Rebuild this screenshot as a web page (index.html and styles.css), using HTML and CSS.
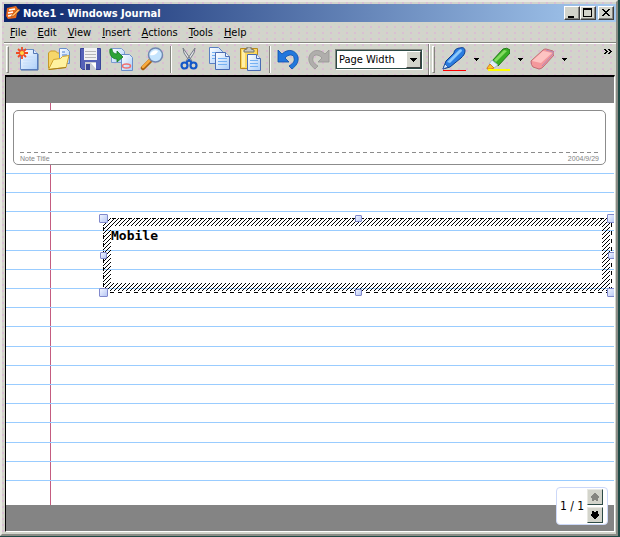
FILE: index.html
```html
<!DOCTYPE html>
<html lang="en">

<head>
    <meta charset="UTF-8" />
    <title>Note1 - Windows Journal</title>
    <link rel="stylesheet" href="styles.css">
</head>

<body>
    <div class="window">
        <!-- title bar -->
        <header class="titlebar">
            <svg class="app-icon" viewBox="0 0 16 16">
                <path d="M2 3l9-2 2 3-2 9-8 1-2-3z" fill="#e8681c" />
                <path d="M4 5l6-1M3 8l5-1M3 11l5-1" stroke="#fff" stroke-width="1.5" />
                <path d="M7 10l6-6 2 1-6 6-3 1z" fill="#ffb45a" stroke="#a8480c" stroke-width=".6" />
            </svg>
            <h1>Note1 - Windows Journal</h1>
            <div class="win-btns">
                <button class="win-btn" aria-label="Minimize"><svg viewBox="0 0 10 10"><path d="M1 8h6v2H1z" /></svg></button>
                <button class="win-btn" aria-label="Maximize"><svg viewBox="0 0 10 10"><path d="M0 0h9v9H0zM1 2v6h7V2z" fill-rule="evenodd" /></svg></button>
                <button class="win-btn close" aria-label="Close"><svg viewBox="0 0 10 10"><path d="M1 1h2v1h1v1h2V2h1V1h2v1H8v1H7v1H6v1h1v1h1v1h1v1H7V7H6V6H4v1H3v1H1V7h1V6h1V5h1V4H3V3H2V2H1z" /></svg></button>
            </div>
        </header>

        <!-- menu bar -->
        <nav class="menu">
            <button><u>F</u>ile</button>
            <button><u>E</u>dit</button>
            <button><u>V</u>iew</button>
            <button><u>I</u>nsert</button>
            <button><u>A</u>ctions</button>
            <button><u>T</u>ools</button>
            <button><u>H</u>elp</button>
        </nav>

        <!-- toolbars -->
        <div class="toolbar">
            <span class="grip"></span>
            <button class="tool" aria-label="New">
                <svg viewBox="0 0 24 24">
                    <defs>
                        <linearGradient id="paper" x1="0" y1="0" x2="1" y2="1"><stop offset="0" stop-color="#fff" /><stop offset="1" stop-color="#a9cdf8" /></linearGradient>
                    </defs>
                    <path d="M4.500 2.500h13l4 4v16h-17z" fill="url(#paper)" stroke="#6a8fcb" />
                    <path d="M22 7v16H5" fill="none" stroke="#4566a8" />
                    <path d="M17.500 2.500v4h4" fill="#dcebff" stroke="#5577b5" />
                    <path d="M7 10h12M7 13h12M7 16h12M7 19h12" stroke="#c4dcfb" />
                    <path d="M6 0v12M0 6h12M2 2l8 8M10 2l-8 8" stroke="#f04a22" stroke-width="1.800" />
                    <circle cx="6" cy="6" r="2" fill="#ffd84a" />
                </svg>
            </button>
            <button class="tool" aria-label="Open">
                <svg viewBox="0 0 24 24">
                    <path d="M1.500 21V6l2-2h5l2 2h4v15z" fill="#f6d66a" stroke="#c89a28" />
                    <path d="M12.500 1.500h7l3 3v12h-10z" fill="url(#paper)" stroke="#6a8fcb" />
                    <path d="M15 5h3M15 8h5" stroke="#4d7cd0" />
                    <path d="M1.500 22.500l5-10 7-1 2-2 6.500-1-3 12z" fill="#fff2a0" stroke="#d0a32e" />
                    <path d="M2 22.500l17-2" stroke="#a87d18" />
                </svg>
            </button>
            <button class="tool" aria-label="Save">
                <svg viewBox="0 0 24 24">
                    <path d="M2.500 1.500h20v21h-18l-2-2z" fill="#5562b8" stroke="#39459a" />
                    <path d="M6 1h13v12H6z" fill="#f2f2f2" />
                    <path d="M7 4.500h11M7 7.500h11M7 10.500h11" stroke="#b8b8b8" />
                    <path d="M7 15h11v8H7z" fill="#c9cbd3" />
                    <path d="M8 17h4v6H8z" fill="#3a4694" />
                    <path d="M13 16h5v6z" fill="#fff" />
                </svg>
            </button>
            <button class="tool" aria-label="Import">
                <svg viewBox="0 0 24 24">
                    <path d="M2.500 1.500h10l3 3v11h-13z" fill="url(#paper)" stroke="#7b9bd0" />
                    <path d="M12.500 7.500h8l3 3v13h-11z" fill="url(#paper)" stroke="#6a8fcb" />
                    <ellipse cx="17.500" cy="19" rx="4" ry="2" fill="none" stroke="#f07070" stroke-width="1.500" />
                    <path d="M1 2c-1 6 2 10 7 10v3l6-5-6-6v3C5 7 3 5 3 2z" fill="#2da336" stroke="#137a22" stroke-width=".8" />
                </svg>
            </button>
            <button class="tool" aria-label="Find">
                <svg viewBox="0 0 24 24">
                    <path d="M3 21l7-7" stroke="#a86010" stroke-width="4.500" stroke-linecap="round" />
                    <path d="M3 20l7-7" stroke="#f7aa3c" stroke-width="2.500" stroke-linecap="round" />
                    <circle cx="15.500" cy="8" r="7" fill="#c5e4fd" stroke="#7188b0" stroke-width="1.500" />
                    <path d="M10 8a5.500 5.500 0 0 1 8-4c-1 3-4 5-8 4z" fill="#fff" />
                </svg>
            </button>
            <span class="sep"></span>
            <button class="tool" aria-label="Cut">
                <svg viewBox="0 0 24 24">
                    <path d="M6 1l1 5 6 9 2-1zM18 1l-1 5-6 9-2-1z" fill="#e4e4e8" stroke="#777c88" />
                    <ellipse cx="7.500" cy="18.500" rx="3" ry="3" fill="none" stroke="#1358c8" stroke-width="2.200" />
                    <ellipse cx="16.500" cy="18.500" rx="3" ry="3" fill="none" stroke="#1358c8" stroke-width="2.200" />
                    <path d="M9 16l3-3 3 3" fill="none" stroke="#1358c8" stroke-width="2" />
                </svg>
            </button>
            <button class="tool" aria-label="Copy">
                <svg viewBox="0 0 24 24">
                    <path d="M1.500 .5h9l4 4v12h-13z" fill="url(#paper)" stroke="#5b80c4" />
                    <path d="M4 5.500h6M4 8.500h6M4 11.500h6" stroke="#75b1f2" />
                    <path d="M7.500 5.500h10l4 4v13h-14z" fill="url(#paper)" stroke="#4a6cb4" />
                    <path d="M17.500 5.500v4h4" fill="#e8f2ff" stroke="#4a6cb4" />
                    <path d="M10 11.500h9M10 14.500h9M10 17.500h9" stroke="#75b1f2" />
                </svg>
            </button>
            <button class="tool" aria-label="Paste">
                <svg viewBox="0 0 24 24">
                    <path d="M1.500 1.500h17v20h-17z" fill="#fbd860" stroke="#b98a1d" />
                    <path d="M3 3h3v17H3z" fill="#fff0a8" />
                    <path d="M5 5V3l3-1V0h4v2l3 1v2z" fill="#c9c9c2" stroke="#77776c" />
                    <path d="M8.500 7.500h9l4 4v12h-13z" fill="url(#paper)" stroke="#4a6cb4" />
                    <path d="M17.500 7.500v4h4" fill="#e8f2ff" stroke="#4a6cb4" />
                    <path d="M11 13.500h8M11 16.500h8M11 19.500h8" stroke="#75b1f2" />
                </svg>
            </button>
            <span class="sep"></span>
            <button class="tool" aria-label="Undo">
                <svg viewBox="0 0 24 24">
                    <path d="M2 3v12h11l-4-4c3-4 9-4 9 0 1 4-2 6-5 8l3 3c4-3 7-7 6-12C20 3 12 1 6 7z" fill="#2277dd" stroke="#0d4ba8" stroke-width=".8" />
                </svg>
            </button>
            <button class="tool" aria-label="Redo" disabled>
                <svg viewBox="0 0 24 24">
                    <path d="M22 3v12H11l4-4c-3-4-9-4-9 0-1 4 2 6 5 8l-3 3C4 19 1 15 2 10 4 3 12 1 18 7z" fill="#b0aeac" stroke="#969492" stroke-width=".8" />
                </svg>
            </button>
            <div class="zoom">
                <select aria-label="Zoom">
                    <option>Page Width</option>
                </select>
                <span class="zoom-arrow"><svg class="arrow" viewBox="0 0 7 4"><path d="M0 0h7v1H6v1H5v1H4v1H3V3H2V2H1V1H0z" /></svg></span>
            </div>
            <span class="sep wide"></span>
            <span class="grip"></span>
            <button class="tool" aria-label="Pen">
                <svg viewBox="0 0 24 24">
                    <path d="M1 22l3-8 8-8c0-3 3-5 6-5 3-1 5 0 5 3 0 3-2 5-4 7L8 20z" fill="#2b7ce0" stroke="#0e3c8e" />
                    <path d="M5 15L17 3c1-1 3-1 3 1L8 16z" fill="#8cc8fb" />
                    <path d="M1 22l2-5 3 3z" fill="#d9ecff" stroke="#0e3c8e" stroke-width=".6" />
                    <path d="M1 23h23v1H1z" fill="#f00" />
                </svg>
            </button>
            <button class="drop" aria-label="Pen styles"><svg viewBox="0 0 5 3"><path d="M0 0h5v1H4v1H3v1H2V2H1V1H0z" /></svg></button>
            <button class="tool" aria-label="Highlighter">
                <svg viewBox="0 0 24 24">
                    <path d="M6 14L17 2q4-2 7 1v3L12 19z" fill="#38ad25" stroke="#237a18" />
                    <path d="M8 13L18 3l3 1L10 15z" fill="#83db60" />
                    <path d="M3 17l3-4 6 5-4 3z" fill="#e0edf8" stroke="#8fa5c0" stroke-width=".7" />
                    <path d="M1 21l3-4 4 4-3 1H1z" fill="#f9c42a" stroke="#d46a10" stroke-width=".8" />
                    <path d="M2 22h22v2H2z" fill="#ff0" />
                </svg>
            </button>
            <button class="drop" aria-label="Highlighter styles"><svg viewBox="0 0 5 3"><path d="M0 0h5v1H4v1H3v1H2V2H1V1H0z" /></svg></button>
            <button class="tool" aria-label="Eraser">
                <svg viewBox="0 0 24 24">
                    <path d="M1 14L13 3q1-1 3-1l7 2q1 1 1 4L13 20q-2 2-4 2l-6-2q-2-2-2-6z" fill="#f4989c" stroke="#c06c74" />
                    <path d="M2 14L13 4l9 2-11 10z" fill="#fdc3c2" />
                    <path d="M16 3l7 2v2L12 19" fill="none" stroke="#b58ab5" />
                </svg>
            </button>
            <button class="drop" aria-label="Eraser styles"><svg viewBox="0 0 5 3"><path d="M0 0h5v1H4v1H3v1H2V2H1V1H0z" /></svg></button>
            <button class="more" aria-label="More buttons"><svg viewBox="0 0 8 5"><path d="M0 0h2v1h1v1h1v1H3v1H2v1H0V4h1V3h1V2H1V1H0zM4 0h2v1h1v1h1v1H7v1H6v1H4V4h1V3h1V2H5V1H4z" /></svg></button>
        </div>

        <!-- note -->
        <main class="canvas">
            <div class="page">
                <div class="note-head">
                    <div class="note-info">
                        <span>Note Title</span>
                        <span>2004/9/29</span>
                    </div>
                </div>
                <div class="rules"></div>
                <div class="textbox">
                    <svg class="frame">
                        <defs>
                            <pattern id="hatch" width="4" height="4" patternUnits="userSpaceOnUse">
                                <path d="M3 0h1v1H3zM2 1h1v1H2zM1 2h1v1H1zM0 3h1v1H0z" />
                            </pattern>
                        </defs>
                        <rect class="band" x="4" y="4" fill="none" stroke="url(#hatch)" stroke-width="8" />
                        <rect class="dash" x="0.500" y="0.500" fill="none" stroke="#000" stroke-dasharray="4 4" />
                    </svg>
                    <p>Mobile</p>
                    <i class="handle nw"></i>
                    <i class="handle small n"></i>
                    <i class="handle ne"></i>
                    <i class="handle small w"></i>
                    <i class="handle small e"></i>
                    <i class="handle sw"></i>
                    <i class="handle small s"></i>
                    <i class="handle se"></i>
                </div>
            </div>
            <div class="pager">
                <span>1 / 1</span>
                <div class="pager-btns">
                    <button aria-label="Previous page" disabled><svg viewBox="0 0 8 8"><path d="M3 0h2v1h1v1h1v1h1v2H7v3H5V7H3v1H1V5H0V3h1V2h1V1h1z" /></svg></button>
                    <button aria-label="Next page"><svg viewBox="0 0 8 8"><path d="M3 8h2V7h1V6h1V5h1V3H7V0H5v1H3V0H1v3H0v2h1v1h1v1h1z" /></svg></button>
                </div>
            </div>
        </main>
    </div>
</body>

</html>
```

FILE: styles.css
```css
* {
    box-sizing: border-box;
}

body {
    display: flex;
    height: 100vh;
    margin: 0;
    padding: 0 2px 1px 0;
    background-color: #1f4a45;
    font-family: "DejaVu Sans Condensed", "DejaVu Sans", sans-serif;
    font-stretch: condensed;
    font-size: 11px;
    color: #000;
}

button {
    margin: 0;
    padding: 0;
    border: none;
    background: none;
    font: inherit;
    color: inherit;
}

svg {
    display: block;
}

.window {
    display: flex;
    flex-direction: column;
    flex: 1;
    min-width: 0;
    padding: 2px 0 2px 2px;
    border: 2px solid;
    border-color: #e8e8e2 #8a8c86 #8a8c86 #e8e8e2;
    background-color: #d3d4cb;
    background-image: radial-gradient(circle at 1px 1px, #d9bfd4 1px, transparent 1px), radial-gradient(circle at 5px 4px, #cdd6cc 1px, transparent 1px);
    background-size: 8px 6px;
}

/* title bar */
.titlebar {
    display: flex;
    align-items: center;
    height: 18px;
    padding: 0 2px 0 1px;
    background: linear-gradient(to right, #0a246a, #a6caf0);
    color: #fff;
}

.app-icon {
    width: 16px;
    height: 16px;
    margin-right: 2px;
}

h1 {
    flex: 1;
    margin: 0;
    font-size: 11px;
    font-weight: bold;
}

.win-btns {
    display: flex;
}

.win-btn {
    width: 16px;
    height: 14px;
    padding: 1px 2px;
    border: 1px solid;
    border-color: #fff #404040 #404040 #fff;
    background-color: #d3d4cb;
    box-shadow: inset -1px -1px #858580;
}

.win-btn svg {
    width: 10px;
    height: 10px;
}

.close {
    margin-left: 2px;
}

/* menu bar */
.menu {
    display: flex;
    height: 22px;
    padding-left: 1px;
    border-bottom: 1px solid #fff;
    box-shadow: inset 0 -1px #85857f;
}

.menu button {
    padding: 0 6px 0 5px;
}

/* toolbars */
.toolbar {
    display: flex;
    align-items: center;
    height: 31px;
    padding-left: 2px;
}

.grip {
    flex: none;
    width: 3px;
    height: 27px;
    margin-right: 4px;
    border: 1px solid;
    border-color: #fff #85857f #85857f #fff;
}

.tool {
    flex: none;
    width: 31px;
    height: 27px;
    padding: 1px 3px 2px;
}

.tool svg {
    width: 24px;
    height: 24px;
}

.sep {
    flex: none;
    width: 2px;
    height: 27px;
    margin: 0 2px;
    border-left: 1px solid #85857f;
    border-right: 1px solid #fff;
}

.sep.wide {
    height: 31px;
    margin: 0 2px 0 5px;
}

.zoom {
    position: relative;
    flex: none;
    width: 88px;
    height: 21px;
    border: 1px solid;
    border-color: #85857f #fff #fff #85857f;
}

.zoom select {
    display: block;
    width: 100%;
    height: 100%;
    padding: 0 17px 0 2px;
    border: 1px solid #2c4a46;
    border-radius: 0;
    background-color: #fff;
    appearance: none;
    font: inherit;
    color: #000;
}

.zoom-arrow {
    position: absolute;
    top: 1px;
    right: 1px;
    display: flex;
    align-items: center;
    justify-content: center;
    width: 15px;
    height: 17px;
    border: 1px solid;
    border-color: #fff #404040 #404040 #fff;
    background-color: #d3d4cb;
    pointer-events: none;
}

.arrow {
    flex: none;
    width: 7px;
    height: 4px;
    shape-rendering: crispEdges;
}

.drop {
    flex: none;
    width: 13px;
    height: 27px;
    padding-left: 4px;
}

.drop svg {
    width: 5px;
    height: 3px;
}

.more {
    align-self: flex-start;
    margin: 5px 4px 0 auto;
}

.more svg {
    width: 8px;
    height: 5px;
}

/* note */
.canvas {
    position: relative;
    flex: 1;
    min-height: 0;
    margin: 0 1px;
    padding-bottom: 26px;
    border-top: 2px solid #000;
    border-left: 1px solid #000;
    border-right: 1px solid #fff;
    border-bottom: 1px solid #fff;
    background-color: #848484;
    overflow: hidden;
}

.page {
    position: relative;
    height: 100%;
    overflow: hidden;
    padding-top: 7px;
    border-top: 26px solid #848484;
    background: linear-gradient(#c45c80, #c45c80) 44px 0 / 1px 100% no-repeat #fff;
}

.note-head {
    display: flex;
    flex-direction: column;
    justify-content: flex-end;
    height: 55px;
    margin: 0 8px 8px 7px;
    padding: 0 6px;
    border: 1px solid #8c8c8c;
    border-radius: 5px;
    background-color: #fff;
}

.note-info {
    display: flex;
    justify-content: space-between;
    height: 12px;
    padding-top: 2px;
    background: repeating-linear-gradient(to right, #8c8c8c 0 4px, transparent 4px 7px) 0 0 / 100% 1px no-repeat;
    font-family: "Liberation Sans", Arial, sans-serif;
    font-size: 7px;
    line-height: 9px;
    color: #848484;
}

/* five ruled lines in every 96px */
.rules {
    height: 308px;
    background-image:
        linear-gradient(#99ccff 1px, transparent 1px),
        linear-gradient(transparent 19px, #99ccff 19px, #99ccff 20px, transparent 20px),
        linear-gradient(transparent 38px, #99ccff 38px, #99ccff 39px, transparent 39px),
        linear-gradient(transparent 57px, #99ccff 57px, #99ccff 58px, transparent 58px),
        linear-gradient(transparent 77px, #99ccff 77px, #99ccff 78px, transparent 78px);
    background-size: 100% 96px;
}

/* text box lying on the page */
.textbox {
    position: absolute;
    top: 115px;
    left: 97px;
    right: 2px;
    height: 75px;
}

.frame {
    position: absolute;
    width: 100%;
    height: 100%;
    shape-rendering: crispEdges;
}

.band {
    width: calc(100% - 10px);
    height: calc(100% - 10px);
}

.dash {
    width: calc(100% - 1px);
    height: calc(100% - 1px);
}

.textbox p {
    margin: 0;
    padding: 10px 8px;
    font-family: "DejaVu Sans Mono", monospace;
    font-size: 13px;
    font-weight: bold;
    line-height: 16px;
}

.handle {
    position: absolute;
    width: 9px;
    height: 9px;
    border: 1px solid #8088cc;
    border-radius: 1px;
    background: linear-gradient(135deg, #f0f4ff, #b8c8f4);
}

.handle.small {
    width: 7px;
    height: 7px;
}

.nw,
.ne {
    top: -4px;
}

.sw,
.se {
    bottom: -4px;
}

.nw,
.sw {
    left: -4px;
}

.ne,
.se {
    right: -4px;
}

.n,
.s {
    left: calc(50% - 3px);
}

.n {
    top: -3px;
}

.s {
    bottom: -3px;
}

.w,
.e {
    top: calc(50% - 4px);
}

.w {
    left: -3px;
}

.e {
    right: -3px;
}

/* page counter */
.pager {
    position: absolute;
    right: 6px;
    bottom: 6px;
    display: flex;
    align-items: center;
    justify-content: space-between;
    width: 52px;
    height: 38px;
    padding: 0 4px 0 3px;
    border: 1px solid #ccd8f8;
    border-radius: 4px;
    background-color: #fff;
    font-size: 12px;
}

.pager-btns {
    display: flex;
    flex-direction: column;
    gap: 2px;
}

.pager button {
    width: 16px;
    height: 16px;
    padding: 3px;
    border: 1px solid;
    border-color: #e8e8e2 #2c4a46 #2c4a46 #e8e8e2;
    background-color: #d3d4cb;
}

.pager svg {
    width: 8px;
    height: 8px;
}

.pager button:disabled svg {
    fill: #858580;
}
```
